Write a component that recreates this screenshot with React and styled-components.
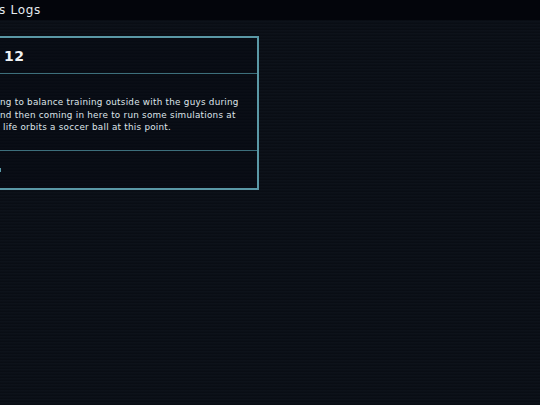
import React from 'react'
import styled, { createGlobalStyle } from 'styled-components'

const GlobalStyle = createGlobalStyle`
  html, body {
    margin: 0;
    padding: 0;
    background: #0a0f17;
    overflow: hidden;
  }
  body {
    font-family: "DejaVu Sans", "Liberation Sans", sans-serif;
    color: #e2e7ec;
  }
`

const Page = styled.div`
  width: 540px;
  height: 405px;
  display: flex;
  flex-direction: column;
  background-color: #0a0f17;
  background-image: repeating-linear-gradient(
    to bottom,
    rgba(255, 255, 255, 0.012) 0px,
    rgba(255, 255, 255, 0.012) 1px,
    rgba(0, 0, 0, 0.12) 2px,
    rgba(0, 0, 0, 0.12) 3px
  );
  overflow: hidden;
`

const TopBar = styled.header`
  height: 20px;
  flex: none;
  background: #03050b;
  display: flex;
  align-items: center;
`

const TopTitle = styled.h1`
  margin: 0 0 0 -1px;
  font-size: 12px;
  font-weight: normal;
  letter-spacing: 0.7px;
  color: #e6ebef;
  white-space: nowrap;
`

const Content = styled.main`
  padding-top: 16px;
  display: flex;
`

const Card = styled.section`
  width: 267px;
  margin-left: -10px;
  border: 2px solid #5a98a6;
  border-left: none;
  background: rgba(6, 10, 18, 0.35);
  display: flex;
  flex-direction: column;
`

const CardHead = styled.div`
  height: 35px;
  display: flex;
  align-items: center;
  padding-left: 14px;
  border-bottom: 1px solid #3d6f7c;
`

const CardTitle = styled.h2`
  margin: 0;
  font-size: 14px;
  font-weight: bold;
  letter-spacing: 0.6px;
  color: #eef2f5;
`

const CardBody = styled.div`
  height: 77px;
  padding: 22px 0 0 10px;
  box-sizing: border-box;
  border-bottom: 1px solid #3d6f7c;
`

const Line = styled.span`
  display: block;
  font-size: 8.8px;
  line-height: 12.5px;
  letter-spacing: 0.25px;
  white-space: nowrap;
  color: #dfe5ea;
`

const CardFoot = styled.div`
  height: 37px;
  display: flex;
  align-items: center;
  padding-left: 10px;
`

const Marker = styled.span`
  display: block;
  width: 2px;
  height: 4px;
  margin-left: -1px;
  background: #5a98a6;
`

export default function App() {
  return (
    <>
      <GlobalStyle />
      <Page>
        <TopBar>
          <TopTitle>s Logs</TopTitle>
        </TopBar>
        <Content>
          <Card>
            <CardHead>
              <CardTitle>12</CardTitle>
            </CardHead>
            <CardBody>
              <Line>ng to balance training outside with the guys during</Line>
              <Line>nd then coming in here to run some simulations at</Line>
              <Line>&nbsp;life orbits a soccer ball at this point.</Line>
            </CardBody>
            <CardFoot>
              <Marker />
            </CardFoot>
          </Card>
        </Content>
      </Page>
    </>
  )
}
